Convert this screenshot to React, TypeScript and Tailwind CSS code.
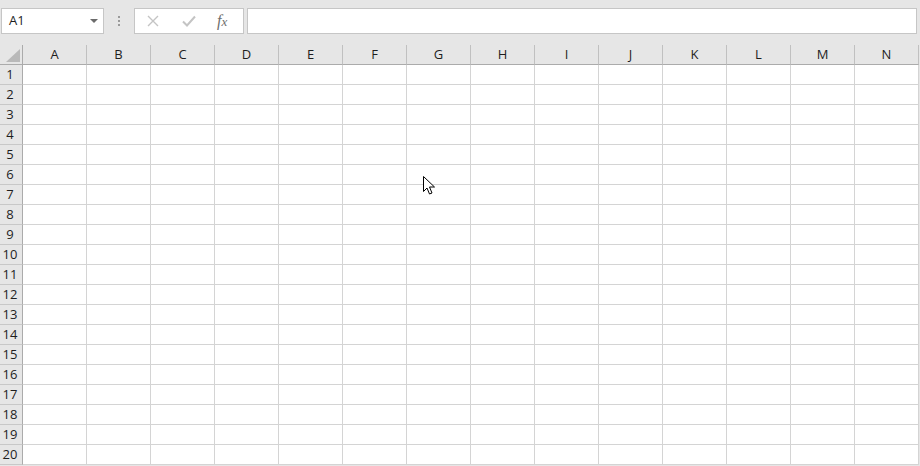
const columns = ['A', 'B', 'C', 'D', 'E', 'F', 'G', 'H', 'I', 'J', 'K', 'L', 'M', 'N'];
const rows = Array.from({ length: 20 }, (_, i) => i + 1);

function NameBox() {
  return (
    <div className="flex h-[26px] w-[103px] items-center justify-between border border-[#c6c6c6] bg-white pl-[7px] pr-[5px]">
      <span className="text-[13px] text-[#1e1e1e]">A1</span>
      <svg width="8" height="5" viewBox="0 0 8 5">
        <path d="M0 0 L8 0 L4 4 Z" fill="#6b6b6b" />
      </svg>
    </div>
  );
}

function FormulaButtons() {
  return (
    <div className="flex h-[26px] w-[110px] items-center border border-[#c6c6c6] bg-white">
      <svg width="12" height="12" viewBox="0 0 12 12" className="ml-[12px]">
        <path d="M1 1 L11 11 M11 1 L1 11" stroke="#c4c4c4" strokeWidth="1.4" />
      </svg>
      <svg width="14" height="12" viewBox="0 0 14 12" className="ml-[23px]">
        <path d="M1 6.5 L5 10.5 L13 1.5" stroke="#c4c4c4" strokeWidth="2" fill="none" />
      </svg>
      <span className="ml-[21px] font-['Liberation_Serif',serif] text-[16px] italic leading-none text-[#6e6e6e]">
        f<span className="text-[13px]">x</span>
      </span>
    </div>
  );
}

function Cursor() {
  return (
    <svg
      width="14"
      height="20"
      viewBox="0 0 14 20"
      className="absolute left-[423px] top-[176px]"
    >
      <path
        d="M0.5 0.5 L0.5 15.5 L4 12 L6.5 18 L9 17 L6.5 11 L11.5 11 Z"
        fill="#fff"
        stroke="#000"
        strokeWidth="1"
        strokeLinejoin="round"
      />
    </svg>
  );
}

export default function App() {
  return (
    <div className="relative h-[466px] w-[920px] overflow-hidden bg-[#e6e6e6] font-['Open_Sans','Liberation_Sans',sans-serif]">
      {/* formula bar */}
      <div className="flex h-[45px] items-start pt-[8px] pl-[1px]">
        <NameBox />
        <div className="ml-[14px] mr-[14px] flex h-[26px] flex-col items-center justify-center gap-[2px]">
          <span className="h-[2px] w-[2px] bg-[#9a9a9a]" />
          <span className="h-[2px] w-[2px] bg-[#9a9a9a]" />
          <span className="h-[2px] w-[2px] bg-[#9a9a9a]" />
        </div>
        <FormulaButtons />
        <div className="ml-[3px] h-[26px] w-[670px] border border-[#c6c6c6] bg-white" />
      </div>

      {/* grid */}
      <div className="grid grid-cols-[23px_repeat(14,64px)]">
        <div className="relative h-[20px] border-r border-b border-[#ababab]">
          <svg width="14" height="13" viewBox="0 0 14 13" className="absolute left-[6px] top-[4px]">
            <path d="M14 0 L14 13 L0 13 Z" fill="#b9b9b9" />
          </svg>
        </div>
        {columns.map((c) => (
          <div
            key={c}
            className="flex h-[20px] items-center justify-center border-r border-b border-r-[#c0c0c0] border-b-[#ababab] text-[13px] text-[#1e1e1e]"
          >
            {c}
          </div>
        ))}
        {rows.map((r) => (
          <div key={r} className="contents">
            <div className="flex h-[20px] items-center justify-center border-r border-b border-r-[#ababab] border-b-[#c8c8c8] pr-[2px] text-[13px] text-[#1e1e1e]">
              {r}
            </div>
            {columns.map((c) => (
              <div key={c} className="h-[20px] border-r border-b border-[#d4d4d4] bg-white" />
            ))}
          </div>
        ))}
      </div>

      <Cursor />
    </div>
  );
}
